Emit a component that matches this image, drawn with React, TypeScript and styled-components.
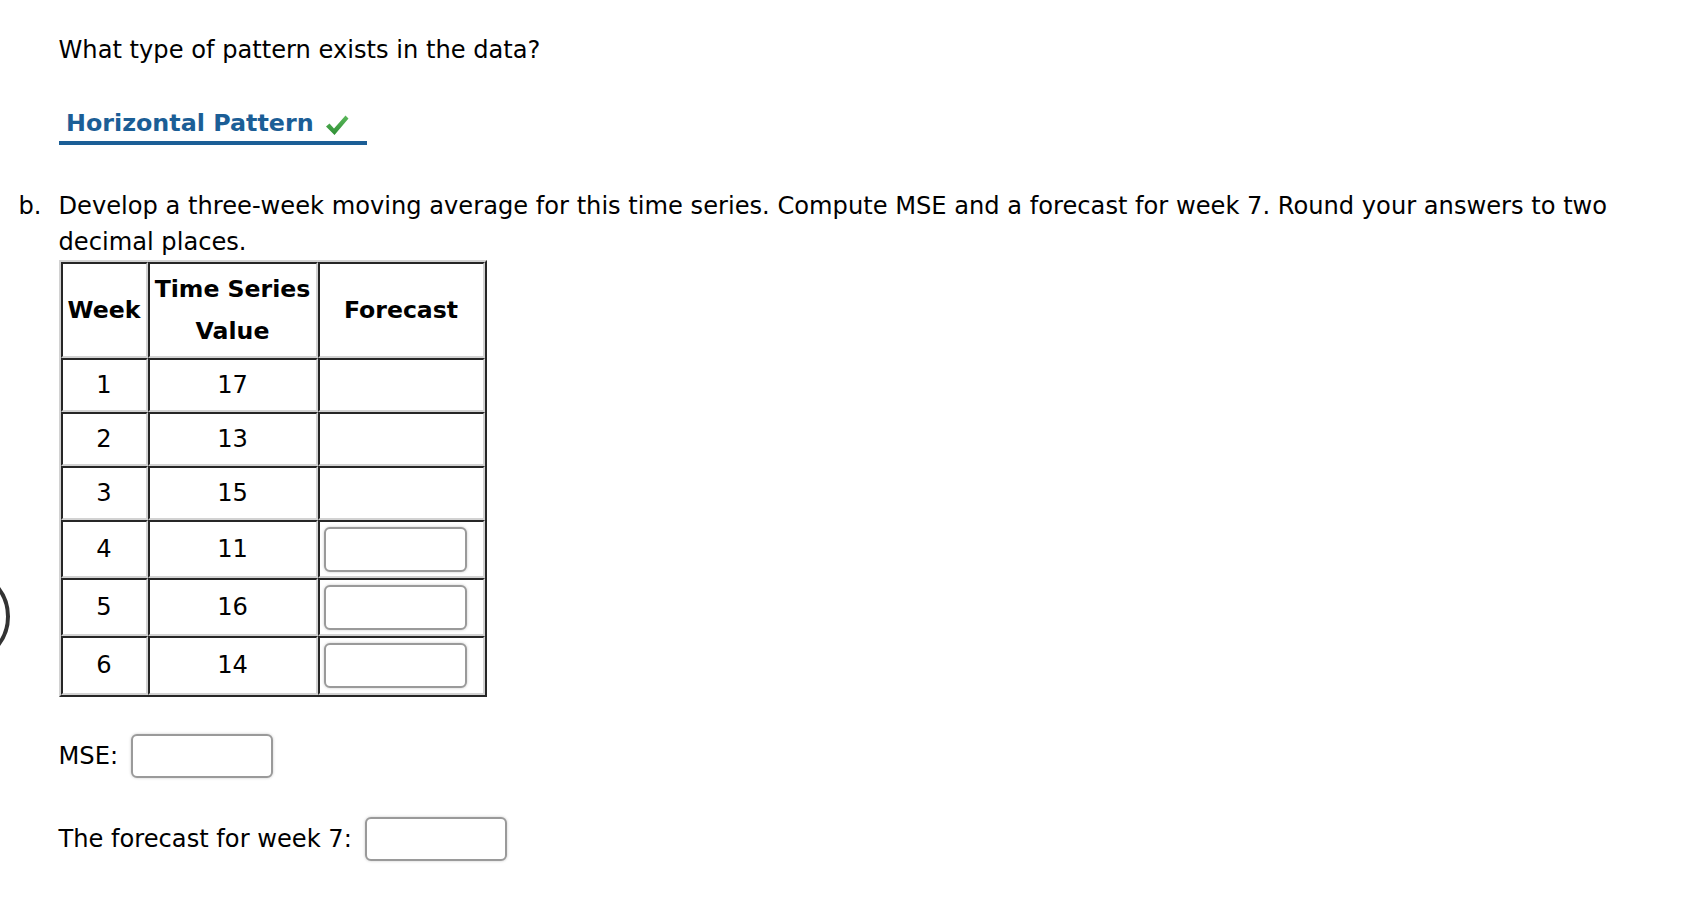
import React from "react";
import styled, { createGlobalStyle } from "styled-components";

const GlobalStyle = createGlobalStyle`
  html, body {
    margin: 0;
    padding: 0;
    background: #fff;
  }
  body {
    font-family: "DejaVu Sans", Verdana, sans-serif;
    color: #000;
  }
`;

const Page = styled.div`
  position: relative;
  padding: 32px 30px 40px 18.5px;
  font-size: 24.15px;
  line-height: 36px;
`;

const Question = styled.div`
  margin-left: 40px;
`;

const AnswerRow = styled.div`
  display: flex;
  margin: 36.5px 0 0 40px;
`;

const AnswerBox = styled.div`
  display: flex;
  align-items: center;
  gap: 11px;
  padding: 0 18px 0 7.5px;
  border-bottom: 4px solid #1b5e96;
  color: #1b5e96;
  font-size: 23.8px;
  font-weight: bold;
`;

const Check = styled.svg`
  width: 24px;
  height: 22px;
  margin-top: 4px;
`;

const PartB = styled.div`
  display: grid;
  grid-template-columns: 40px 1fr;
  margin-top: 43.5px;
`;

const PartBody = styled.div`
  display: flex;
  flex-direction: column;
  align-items: flex-start;
`;

const DataTable = styled.table`
  margin-top: 0;
  width: 428px;
  table-layout: fixed;
  border-collapse: separate;
  border-spacing: 0;
  border: 2px solid;
  border-color: #d2d2d2 #262626 #262626 #d2d2d2;
`;

const HeadCell = styled.th<{ $w: number }>`
  width: ${(p) => p.$w}px;
  box-sizing: border-box;
  padding: 4px 0;
  line-height: 42px;
  font-size: 23.6px;
  font-weight: bold;
  text-align: center;
  white-space: nowrap;
  border: 2px solid;
  border-color: #262626 #d2d2d2 #d2d2d2 #262626;
`;

const Cell = styled.td<{ $field?: boolean }>`
  padding: ${(p) => (p.$field ? "4.6px 4px" : "7px 4px")};
  line-height: 36px;
  text-align: ${(p) => (p.$field ? "left" : "center")};
  vertical-align: middle;
  border: 2px solid;
  border-color: #262626 #d2d2d2 #d2d2d2 #262626;
`;

const Input = styled.input`
  display: block;
  box-sizing: border-box;
  width: 142px;
  height: 44px;
  padding: 0 6px;
  border: 2px solid #9a9a9a;
  border-radius: 6px;
  background: #fff;
  box-shadow: 0 0 3px rgba(0, 0, 0, 0.22);
  font: inherit;
  outline: none;
`;

const CellInput = styled(Input)`
  width: 143px;
  height: 45px;
`;

const FieldRow = styled.div<{ $gap?: number }>`
  display: flex;
  align-items: center;
  gap: 13px;
  margin-top: ${(p) => p.$gap ?? 38.5}px;
`;

const FloatingRing = styled.div`
  position: absolute;
  left: -87px;
  top: 568px;
  width: 97px;
  height: 97px;
  box-sizing: border-box;
  border: 4px solid #333;
  border-radius: 50%;
`;

const rows = [
  { week: 1, value: 17, input: false },
  { week: 2, value: 13, input: false },
  { week: 3, value: 15, input: false },
  { week: 4, value: 11, input: true },
  { week: 5, value: 16, input: true },
  { week: 6, value: 14, input: true },
];

export default function App() {
  return (
    <Page>
      <GlobalStyle />
      <FloatingRing />
      <Question>What type of pattern exists in the data?</Question>
      <AnswerRow>
        <AnswerBox>
          Horizontal Pattern
          <Check viewBox="0 0 24 22">
            <defs>
              <linearGradient id="chk" x1="0" y1="0" x2="0" y2="1">
                <stop offset="0" stopColor="#5bb85b" />
                <stop offset="1" stopColor="#2f8f35" />
              </linearGradient>
            </defs>
            <path d="M1 12.5 L4.5 9.5 L9 14.5 L20.5 1.5 L23.5 4.5 L9.5 21 Z" fill="url(#chk)" />
          </Check>
        </AnswerBox>
      </AnswerRow>

      <PartB>
        <span>b.</span>
        <PartBody>
          <div>
            Develop a three-week moving average for this time series. Compute MSE and a
            forecast for week 7. Round your answers to two decimal places.
          </div>
          <DataTable>
            <thead>
              <tr>
                <HeadCell $w={87}>Week</HeadCell>
                <HeadCell $w={170}>
                  Time Series
                  <br />
                  Value
                </HeadCell>
                <HeadCell $w={167}>Forecast</HeadCell>
              </tr>
            </thead>
            <tbody>
              {rows.map((r) => (
                <tr key={r.week}>
                  <Cell>{r.week}</Cell>
                  <Cell>{r.value}</Cell>
                  <Cell $field={r.input}>{r.input ? <CellInput type="text" /> : null}</Cell>
                </tr>
              ))}
            </tbody>
          </DataTable>

          <FieldRow $gap={37.5}>
            <span>MSE:</span>
            <Input type="text" />
          </FieldRow>
          <FieldRow $gap={38.5}>
            <span>The forecast for week 7:</span>
            <Input type="text" />
          </FieldRow>
        </PartBody>
      </PartB>
    </Page>
  );
}
